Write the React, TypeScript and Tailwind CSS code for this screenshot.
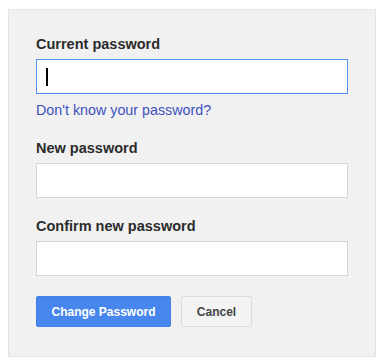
import React from "react";

const font = { fontFamily: '"Liberation Sans", Arial, sans-serif' };

function Field({ label, focused = false }: { label: string; focused?: boolean }) {
  return (
    <div className="flex flex-col gap-[7px]">
      <div className="text-[14.5px] font-bold leading-[16px] text-[#2b2b2b]">{label}</div>
      <div
        className={
          "h-[35px] w-full bg-white border flex items-center pl-[9px] " +
          (focused ? "border-[#4d90fe]" : "border-[#d6d6d6]")
        }
      >
        {focused && <span className="block w-[1.5px] h-[18px] bg-black" />}
      </div>
    </div>
  );
}

export default function App() {
  return (
    <div className="w-[385px] h-[364px] bg-white pt-[9px] pl-[8px]" style={font}>
      <div className="w-[368px] h-[348px] bg-[#f1f1f1] border border-[#e3e3e3] pt-[26px] px-[27px] flex flex-col">
        <Field label="Current password" focused />
        <a className="mt-[8px] text-[14.3px] leading-[16px] text-[#3d50c0] cursor-pointer">
          Don't know your password?
        </a>
        <div className="mt-[22px]">
          <Field label="New password" />
        </div>
        <div className="mt-[20px]">
          <Field label="Confirm new password" />
        </div>
        <div className="mt-[20px] flex gap-[10px]">
          <button className="h-[31px] w-[135px] bg-[#4787ed] border border-[#3f80ea] rounded-[2px] text-white text-[12px] font-bold">
            Change Password
          </button>
          <button className="h-[31px] w-[71px] bg-[#f3f3f3] border border-[#dcdcdc] rounded-[2px] text-[#444] text-[12px] font-bold">
            Cancel
          </button>
        </div>
      </div>
    </div>
  );
}
